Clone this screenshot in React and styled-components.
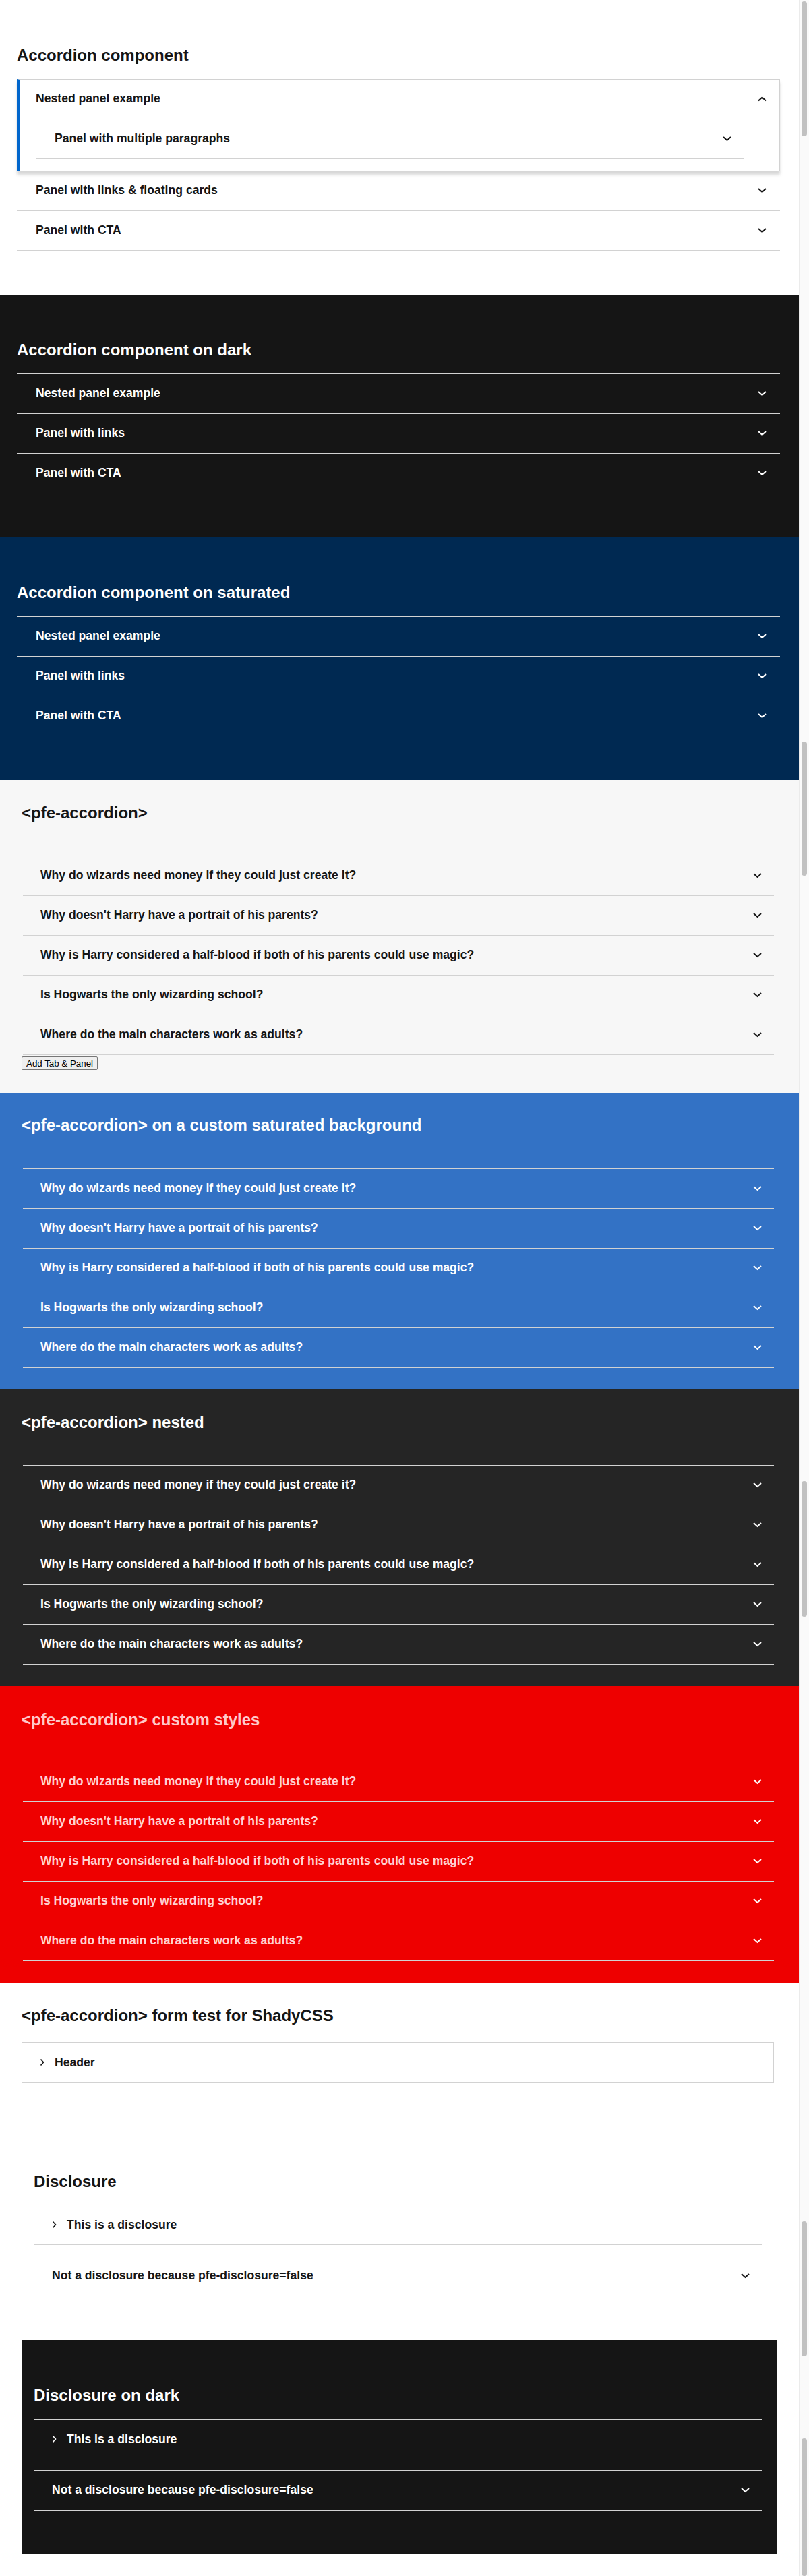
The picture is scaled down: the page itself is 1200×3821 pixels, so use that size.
import React from "react";
import styled, { createGlobalStyle } from "styled-components";

const GlobalStyle = createGlobalStyle`
  html, body {
    margin: 0;
    padding: 0;
  }
  body {
    font-family: "Liberation Sans", Arial, sans-serif;
    color: #151515;
    background: #fff;
  }
`;

const Page = styled.div`
  display: flex;
  width: 1200px;
`;

const Main = styled.main`
  width: 1185px;
  flex: none;
`;

const ScrollTrack = styled.div`
  flex: 1;
  display: flex;
  flex-direction: column;
  background: #fafafa;
  border-left: 1px solid #ebebeb;
  padding: 0 3px 0 3px;
`;

const ScrollThumb = styled.div`
  margin-top: ${(p) => p.$mt}px;
  height: ${(p) => p.$h}px;
  border-radius: 4px;
  background: #c1c1c1;
`;

const Band = styled.section`
  background: ${(p) => p.$bg};
  color: ${(p) => p.$fg};
  padding: ${(p) => p.$pad};
`;

const Box = styled.section`
  background: ${(p) => p.$bg};
  color: ${(p) => p.$fg};
  margin: 0 32px 0 32px;
  padding: 67px 22px 65px 18px;
`;

const Title = styled.h2`
  margin: 0 0 ${(p) => p.$gap}px;
  font-size: 24px;
  line-height: 29px;
  font-weight: 700;
  color: ${(p) => p.$color || "inherit"};
`;

const List = styled.div`
  border-bottom: 1px solid ${(p) => p.$line};
`;

const Indent = styled.div`
  padding-left: 2px;
`;

const Row = styled.div`
  display: flex;
  align-items: center;
  justify-content: space-between;
  height: 58px;
  padding: 0 ${(p) => p.$pr || 20}px 0 ${(p) => p.$pl || 28}px;
  border-top: ${(p) => (p.$noTop ? "none" : `1px solid ${p.$line}`)};
  color: ${(p) => p.$fg || "inherit"};
  font-size: 17.6px;
  font-weight: 700;
  line-height: 1.2;
`;

const Expanded = styled.div`
  border: 1px solid #d2d2d2;
  border-left: 4px solid #06c;
  box-shadow: 0 5px 4px rgba(140, 140, 140, 0.35);
  background: #fff;
  position: relative;
`;

const Panel = styled.div`
  padding: 0 52px 17px 24px;
`;

const Disclosure = styled.div`
  display: flex;
  align-items: center;
  gap: 15px;
  height: 58px;
  padding: 0 26px;
  border: 1px solid ${(p) => p.$line};
  margin-bottom: ${(p) => (p.$last ? 0 : 16)}px;
  font-size: 17.6px;
  font-weight: 700;
`;

const AddButton = styled.button`
  display: block;
  margin-top: 2px;
  height: 20px;
  padding: 1px 6px;
  font-family: "Liberation Sans", Arial, sans-serif;
  font-size: 13.33px;
  color: #000;
  background: #efefef;
  border: 1px solid #767676;
  border-radius: 2px;
`;

const Chevron = ({ dir = "down", color = "currentColor" }) => {
  if (dir === "right") {
    return (
      <svg width="7" height="12" viewBox="0 0 7 12" fill="none">
        <path d="M1.5 1.5 L5.5 6 L1.5 10.5" stroke={color} strokeWidth="1.6" />
      </svg>
    );
  }
  const d = dir === "up" ? "M1 6.5 L6.5 1.5 L12 6.5" : "M1 1 L6.5 6 L12 1";
  return (
    <svg width="13" height="8" viewBox="0 0 13 8" fill="none">
      <path d={d} stroke={color} strokeWidth="2" />
    </svg>
  );
};

const questions = [
  "Why do wizards need money if they could just create it?",
  "Why doesn't Harry have a portrait of his parents?",
  "Why is Harry considered a half-blood if both of his parents could use magic?",
  "Is Hogwarts the only wizarding school?",
  "Where do the main characters work as adults?",
];

const basic = ["Nested panel example", "Panel with links", "Panel with CTA"];

// thumb positions of the (stitched) page scrollbar
const thumbs = [
  { mt: 2, h: 200 },
  { mt: 898, h: 199 },
  { mt: 898, h: 201 },
  { mt: 897, h: 200 },
  { mt: 122, h: 204 },
];

function Accordion({ items, line, fg, pl, pr, chevron, firstLine }) {
  return (
    <List $line={line}>
      {items.map((t, i) => (
        <Row
          key={t}
          $line={i === 0 && firstLine ? firstLine : line}
          $fg={fg}
          $pl={pl}
          $pr={pr}
        >
          <span>{t}</span>
          <Chevron color={chevron} />
        </Row>
      ))}
    </List>
  );
}

function DisclosureDemo({ title, bg, fg, gap, line, last }) {
  return (
    <Box $bg={bg} $fg={fg} style={last ? { marginBottom: 32 } : undefined}>
      <Title $gap={gap}>{title}</Title>
      <Disclosure $line={line}>
        <Chevron dir="right" />
        <span>This is a disclosure</span>
      </Disclosure>
      <List $line="#d2d2d2">
        <Row $line="#d2d2d2" $pl={27} $pr={19}>
          <span>Not a disclosure because pfe-disclosure=false</span>
          <Chevron />
        </Row>
      </List>
    </Box>
  );
}

export default function App() {
  return (
    <>
      <GlobalStyle />
      <Page>
        <Main>
          <Band $bg="#fff" $fg="#151515" $pad="67px 28px 65px 25px">
            <Title $gap={21}>Accordion component</Title>
            <div>
              <Expanded>
                <Row $noTop $pl={24} $pr={19}>
                  <span>Nested panel example</span>
                  <Chevron dir="up" />
                </Row>
                <Panel>
                  <List $line="#d2d2d2">
                    <Row $line="#d2d2d2" $pr={19}>
                      <span>Panel with multiple paragraphs</span>
                      <Chevron />
                    </Row>
                  </List>
                </Panel>
              </Expanded>
              <List $line="#d2d2d2">
                <Row $noTop $line="#d2d2d2">
                  <span>Panel with links &amp; floating cards</span>
                  <Chevron />
                </Row>
                <Row $line="#d2d2d2">
                  <span>Panel with CTA</span>
                  <Chevron />
                </Row>
              </List>
            </div>
          </Band>

          <Band $bg="#151515" $fg="#fff" $pad="67px 28px 65px 25px">
            <Title $gap={21}>Accordion component on dark</Title>
            <Accordion items={basic} line="#d2d2d2" />
          </Band>

          <Band $bg="#002952" $fg="#fff" $pad="67px 28px 65px 25px">
            <Title $gap={21}>Accordion component on saturated</Title>
            <Accordion items={basic} line="#d2d2d2" />
          </Band>

          <Band $bg="#f7f7f7" $fg="#151515" $pad="34px 37px 34px 32px">
            <Title $gap={49}>{"<pfe-accordion>"}</Title>
            <Indent>
              <Accordion items={questions} line="#d2d2d2" pl={26} pr={18} />
            </Indent>
            <AddButton>Add Tab &amp; Panel</AddButton>
          </Band>

          <Band $bg="#3372c5" $fg="#fff" $pad="33px 37px 31px 32px">
            <Title $gap={50}>{"<pfe-accordion>"} on a custom saturated background</Title>
            <Indent>
              <Accordion items={questions} line="#d2d2d2" pl={26} pr={18} />
            </Indent>
          </Band>

          <Band $bg="#252525" $fg="#fff" $pad="35px 37px 32px 32px">
            <Title $gap={49}>{"<pfe-accordion>"} nested</Title>
            <Indent>
              <Accordion items={questions} line="#d2d2d2" pl={26} pr={18} />
            </Indent>
          </Band>

          <Band $bg="#ee0000" $fg="#ffd1d1" $pad="35px 37px 32px 32px">
            <Title $gap={48} $color="#ffc9c9">
              {"<pfe-accordion>"} custom styles
            </Title>
            <Indent>
              <Accordion
                items={questions}
                line="#d2d2d2"
                firstLine="#fff"
                fg="#ffd1d1"
                chevron="#fff"
                pl={26}
                pr={18}
              />
            </Indent>
          </Band>

          <Band $bg="#fff" $fg="#151515" $pad="34px 37px 65px 32px">
            <Title $gap={25}>{"<pfe-accordion>"} form test for ShadyCSS</Title>
            <Disclosure $line="#d2d2d2" $last>
              <Chevron dir="right" />
              <span>Header</span>
            </Disclosure>
          </Band>

          <DisclosureDemo title="Disclosure" bg="#fff" fg="#151515" gap={20} line="#d2d2d2" />
          <DisclosureDemo title="Disclosure on dark" bg="#151515" fg="#fff" gap={21} line="#d2d2d2" last />
        </Main>
        <ScrollTrack>
          {thumbs.map((t, i) => (
            <ScrollThumb key={i} $mt={t.mt} $h={t.h} />
          ))}
        </ScrollTrack>
      </Page>
    </>
  );
}
